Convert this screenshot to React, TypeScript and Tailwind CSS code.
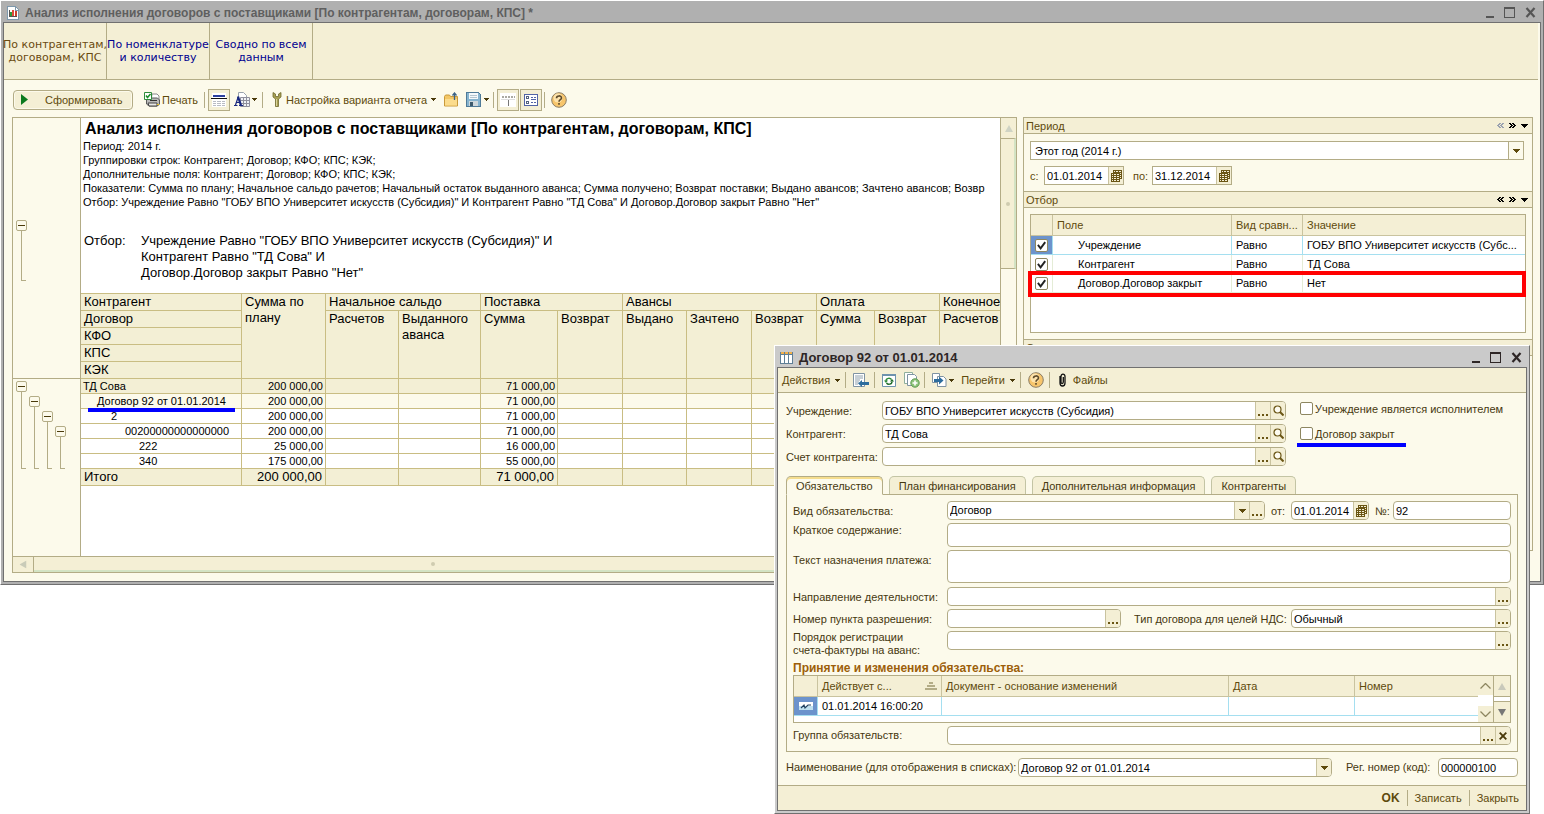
import type { ReactNode } from "react";

const reportTabs = [
  { lines: ["По контрагентам,", "договорам, КПС"], active: true },
  { lines: ["По номенклатуре", "и количеству"], active: false },
  { lines: ["Сводно по всем", "данным"], active: false },
];

const reportInfo = [
  "Период: 2014 г.",
  "Группировки строк: Контрагент; Договор; КФО; КПС; КЭК;",
  "Дополнительные поля: Контрагент; Договор; КФО; КПС; КЭК;",
  "Показатели: Сумма по плану; Начальное сальдо рачетов; Начальный остаток выданного аванса; Сумма получено; Возврат поставки; Выдано авансов; Зачтено авансов; Возвр",
  'Отбор: Учреждение Равно "ГОБУ ВПО Университет искусств (Субсидия)" И Контрагент Равно "ТД Сова" И Договор.Договор закрыт Равно "Нет"',
];

const reportRows = [
  { name: "ТД Сова", plan: "200 000,00", supply: "71 000,00", pad: "pl-[2px]", bg: "bg-[#f3efd5]" },
  { name: "Договор 92 от 01.01.2014", plan: "200 000,00", supply: "71 000,00", pad: "pl-4", bg: "bg-[#fcfaeb]", mark: true },
  { name: "2", plan: "200 000,00", supply: "71 000,00", pad: "pl-[30px]", bg: "bg-white" },
  { name: "00200000000000000", plan: "200 000,00", supply: "71 000,00", pad: "pl-11", bg: "bg-white" },
  { name: "222", plan: "25 000,00", supply: "16 000,00", pad: "pl-[58px]", bg: "bg-white" },
  { name: "340", plan: "175 000,00", supply: "55 000,00", pad: "pl-[58px]", bg: "bg-white" },
];

const filters = [
  { field: "Учреждение", kind: "Равно", value: "ГОБУ ВПО Университет искусств (Субс..." },
  { field: "Контрагент", kind: "Равно", value: "ТД Сова" },
  { field: "Договор.Договор закрыт", kind: "Равно", value: "Нет" },
];

const treeLevels = ["pt-0", "pt-[15px]", "pt-[30px]", "pt-[45px]"];

/* ---------- icons ---------- */

function Arrow({ className = "" }: { className?: string }) {
  return (
    <svg className={className} width="7" height="4" viewBox="0 0 7 4" shapeRendering="crispEdges">
      <path d="M0 0h7v1H0zM1 1h5v1H1zM2 2h3v1H2zM3 3h1v1H3z" fill="currentColor" />
    </svg>
  );
}

function SmallArrow() {
  return (
    <svg width="5" height="3" viewBox="0 0 5 3" shapeRendering="crispEdges">
      <path d="M0 0h5v1H0zM1 1h3v1H1zM2 2h1v1H2z" fill="#4a3a0a" />
    </svg>
  );
}

function Chevrons({ right, muted }: { right?: boolean; muted?: boolean }) {
  return (
    <svg width="7" height="5" viewBox="0 0 7 5" shapeRendering="crispEdges" className={muted ? "text-gray-400" : "text-black"}>
      <path
        d={
          right
            ? "M0 0h2v1H0zM1 1h2v1H1zM2 2h2v1H2zM1 3h2v1H1zM0 4h2v1H0zM3 0h2v1H3zM4 1h2v1H4zM5 2h2v1H5zM4 3h2v1H4zM3 4h2v1H3z"
            : "M2 0h2v1H2zM1 1h2v1H1zM0 2h2v1H0zM1 3h2v1H1zM2 4h2v1H2zM5 0h2v1H5zM4 1h2v1H4zM3 2h2v1H3zM4 3h2v1H4zM5 4h2v1H5z"
        }
        fill="currentColor"
      />
    </svg>
  );
}

function ChartIcon() {
  return (
    <svg width="12" height="14" viewBox="0 0 12 14" shapeRendering="crispEdges">
      <path d="M.5.5h8l3 3v10H.5z" fill="#fff" stroke="#7d98ac" />
      <path d="M8 0v4h4" fill="none" stroke="#7d98ac" />
      <path d="M2 4h1v7H2z" fill="#555" />
      <path d="M2 10h8v1H2z" fill="#555" />
      <path d="M3 6h2v4H3z" fill="#2f9a3a" />
      <path d="M5 4h2v6H5z" fill="#e04b3c" />
      <path d="M8 5h2v5H8z" fill="#c8402f" />
    </svg>
  );
}

function PrintIcon() {
  return (
    <svg width="16" height="15" viewBox="0 0 16 15">
      <path d="M8 2h5l2 2v5H7z" fill="#fff" stroke="#8a8a8a" />
      <path d="M2.500 8l3-2h8l2 2v4l-2 2H5l-2.500-2z" fill="#b9b9b9" stroke="#5b5b5b" />
      <path d="M4 11h9v3H5z" fill="#e8e8e8" stroke="#444" />
      <path d="M6 8.500h7" stroke="#333" />
      <path d="M.5.5h7v7h-7z" fill="#fff" stroke="#2f8b3a" />
      <path d="M2 3.500l1.500 2L6.500 2" fill="none" stroke="#1b8f2a" strokeWidth="1.500" />
      <path d="M13 12.500h2" stroke="#e6c21a" />
    </svg>
  );
}

function RowsIcon() {
  return (
    <svg width="16" height="14" viewBox="0 0 16 14" shapeRendering="crispEdges">
      <path d="M1 0h14v14H1z" fill="#fff" />
      <path d="M2 2h12v2H2z" fill="#2b3f9e" />
      <path d="M0 5h16v1H0z" fill="#111" />
      <path d="M2 8h3v1H2zM6 8h4v1H6zM11 8h3v1h-3zM2 10h3v1H2zM6 10h4v1H6zM11 10h3v1h-3zM2 12h3v1H2zM6 12h4v1H6zM11 12h3v1h-3z" fill="#b9bcc4" />
    </svg>
  );
}

function FontTableIcon() {
  return (
    <svg width="16" height="15" viewBox="0 0 16 15">
      <path d="M4.500.5h5l3 3v4h-8z" fill="#fff" stroke="#9aa3ad" />
      <path d="M6.500 5.500h9v9h-9zM6.500 8.500h9M6.500 11.500h9M9.500 5.500v9M12.500 5.500v9" fill="#eef1f5" stroke="#8f8f9c" />
      <path d="M0 13.500h3.500M5 13.500h4" stroke="#17277f" />
      <path d="M1.500 13L4.200 5M2.500 10.500h4" fill="none" stroke="#17277f" strokeWidth="1.200" />
      <path d="M4 4.500L7 13.500" stroke="#17277f" strokeWidth="2.200" />
    </svg>
  );
}

function WrenchIcon() {
  return (
    <svg width="10" height="15" viewBox="0 0 10 15">
      <path d="M1 0.500v4.500l2.500 2v7.500h3V7L9 5V.5L6.500 2v2.500h-3V2z" fill="#a79f52" stroke="#6f6a2e" strokeWidth=".8" />
      <path d="M4.500 7v7" stroke="#d8d29a" />
    </svg>
  );
}

function FolderIcon() {
  return (
    <svg width="15" height="15" viewBox="0 0 15 15">
      <path d="M.5 4.500l1-1.500h4l1 1.500h7v9.500H.5z" fill="#f3c767" stroke="#c99a3a" />
      <path d="M1 7h12v6.500H1z" fill="#fbdc8c" />
      <path d="M10.500 8V2M8.500 3.500l2-2.500 2 2.500" fill="none" stroke="#3b6286" strokeWidth="1.300" />
    </svg>
  );
}

function FloppyIcon() {
  return (
    <svg width="15" height="15" viewBox="0 0 15 15" shapeRendering="crispEdges">
      <path d="M.5.5h12l2 2v12H.5z" fill="#86b4cf" stroke="#4f7a98" />
      <path d="M3 1h9v6H3z" fill="#f5f9fb" />
      <path d="M4 3h7v1H4zM4 5h7v1H4z" fill="#b5c6d0" />
      <path d="M3 9h9v5H3z" fill="#cfd8dc" />
      <path d="M4 10h3v4H4z" fill="#3d5a6c" />
    </svg>
  );
}

function HeaderIcon() {
  return (
    <svg width="16" height="14" viewBox="0 0 16 14" shapeRendering="crispEdges">
      <path d="M0 0h16v14H0z" fill="#fff" />
      <path d="M2 3h2v2H2zM5 3h2v2H5zM8 3h2v2H8zM11 3h2v2h-2zM14 3h1v2h-1z" fill="#aaa9a2" />
      <path d="M8 6h1v7H8z" fill="#777" />
      <path d="M1 6h14v1H1z" fill="#ddd" />
    </svg>
  );
}

function SettingsIcon() {
  return (
    <svg width="14" height="12" viewBox="0 0 14 12" shapeRendering="crispEdges">
      <path d="M.5.5h13v11H.5z" fill="#fff" stroke="#5264a6" />
      <path d="M2.500 2.500h2v2h-2zM2.500 7.500h2v2h-2z" fill="#fff" stroke="#53617f" />
      <path d="M7 3h2v1H7zM10 3h2v1h-2zM7 5h5v1H7zM7 8h2v1H7zM10 8h2v1h-2z" fill="#5264a6" />
    </svg>
  );
}

function HelpIcon() {
  return (
    <svg width="16" height="16" viewBox="0 0 16 16">
      <circle cx="8" cy="8" r="7.300" fill="#f7c56b" stroke="#8a7d66" />
      <circle cx="7" cy="6" r="4.500" fill="#fde3ac" />
      <path d="M5.500 6.200C5.500 3.200 10.500 3.200 10.500 6c0 1.700-2.500 1.700-2.500 3.700M8 11v1.700" fill="none" stroke="#5d4a2a" strokeWidth="1.600" />
    </svg>
  );
}

function CalendarIcon() {
  return (
    <svg width="11" height="12" viewBox="0 0 11 12" shapeRendering="crispEdges">
      <path d="M2 0h9v9H9v3H0V3h2z" fill="#6a5514" />
      <path
        d="M3 1h1v1H3zM5 1h2v1H5zM8 1h2v1H8zM9 3h1v1H9zM9 5h1v1H9zM9 7h1v1H9zM1 4h1v1H1zM3 4h2v1H3zM6 4h2v1H6zM1 6h1v1H1zM3 6h2v1H3zM6 6h2v1H6zM1 8h1v1H1zM3 8h2v1H3zM6 8h2v1H6zM1 10h1v1H1zM3 10h2v1H3zM6 10h2v1H6z"
        fill="#f4efd5"
      />
    </svg>
  );
}

function SearchIcon() {
  return (
    <svg width="11" height="11" viewBox="0 0 11 11">
      <circle cx="4.500" cy="4.500" r="3.500" fill="#fdfbf0" stroke="#6a5514" strokeWidth="1.200" />
      <path d="M7 7l3.500 3.500" stroke="#6a5514" strokeWidth="2" />
    </svg>
  );
}

function DotsIcon() {
  return (
    <svg width="10" height="10" viewBox="0 0 10 10" shapeRendering="crispEdges">
      <path d="M0 8h2v2H0zM4 8h2v2H4zM8 8h2v2H8z" fill="#6a5514" />
    </svg>
  );
}

function ClearIcon() {
  return (
    <svg width="8" height="8" viewBox="0 0 8 8">
      <path d="M.7.7l6.600 6.600M7.300.7L.7 7.300" stroke="#4a3a0a" strokeWidth="1.900" />
    </svg>
  );
}

function ColumnsIcon() {
  return (
    <svg width="13" height="12" viewBox="0 0 13 12" shapeRendering="crispEdges">
      <path d="M0 0h13v12H0z" fill="#5f7f96" />
      <path d="M1 3h3v8H1zM5 3h3v8H5zM9 3h3v8H9z" fill="#fff" />
      <path d="M1 0h3v2H1zM5 0h3v2H5zM9 0h3v2H9z" fill="#f2b04a" />
    </svg>
  );
}

function DocBackIcon() {
  return (
    <svg width="16" height="15" viewBox="0 0 16 15">
      <path d="M.5.5h11v13H.5z" fill="#fff" stroke="#7f93a3" />
      <path d="M2 3h8M2 5h8M2 7h5M2 9h4M2 11h3" stroke="#8fa0ad" />
      <path d="M5 10.500l4-3.500v2h7v3H9v2z" fill="#2d6d9e" />
    </svg>
  );
}

function RefreshIcon() {
  return (
    <svg width="14" height="13" viewBox="0 0 14 13">
      <path d="M.5.5h13v12H.5z" fill="#fff" stroke="#6f93ad" />
      <path d="M0 0h14v2H0z" fill="#6f93ad" />
      <path d="M4 7C4 4 8 3.500 9.500 5.500" fill="none" stroke="#2f8b3a" strokeWidth="1.400" />
      <path d="M2 6.500h4L4 9z" fill="#2f8b3a" />
      <path d="M10 7.500C10 10.500 6 11 4.500 9" fill="none" stroke="#1e6b28" strokeWidth="1.400" />
      <path d="M8 7.500h4L10 5z" fill="#1e6b28" />
    </svg>
  );
}

function CopyAddIcon() {
  return (
    <svg width="16" height="16" viewBox="0 0 16 16">
      <path d="M.5.5h8v11h-8z" fill="#fff" stroke="#8fae9c" />
      <path d="M3.500 2.500h7l2 2v9h-9z" fill="#fff" stroke="#7f93a3" />
      <circle cx="11" cy="11" r="4.200" fill="#8fc47c" stroke="#5c9a4f" />
      <path d="M11 8.500v5M8.500 11h5" stroke="#fff" strokeWidth="1.600" />
    </svg>
  );
}

function GoIcon() {
  return (
    <svg width="15" height="14" viewBox="0 0 15 14">
      <path d="M.5.5h7v9h-7z" fill="#fff" stroke="#7f93a3" />
      <path d="M5.500 3.500h6l2.500 2.500v7.500H5.500z" fill="#fff" stroke="#7f93a3" />
      <path d="M2 6h5V3.500L11.500 7.500 7 11.500V9H2z" fill="#2d6d9e" />
    </svg>
  );
}

function ClipIcon() {
  return (
    <svg width="7" height="14" viewBox="0 0 7 14">
      <path d="M1 3v7c0 4 5 4 5 0V3.500C6 .3 2 .3 2 3.500V9c0 2 2.300 2 2.300 0V4" fill="none" stroke="#111" strokeWidth="1.300" />
    </svg>
  );
}

function SortIcon() {
  return (
    <svg width="12" height="8" viewBox="0 0 12 8" shapeRendering="crispEdges">
      <path d="M4 0h4v2H4zM2 3h8v2H2zM0 6h12v2H0z" fill="#b3ac86" />
    </svg>
  );
}

function EntryIcon() {
  return (
    <svg width="14" height="8" viewBox="0 0 14 8">
      <path d="M0 0h14v8H0z" fill="#fff" />
      <path d="M0 4h14v4H0z" fill="#bfe0ee" />
      <path d="M2 6l3-3 1 3 3-3h3" fill="none" stroke="#23415e" strokeWidth="1.200" />
    </svg>
  );
}

function Triangle({ className = "" }: { className?: string }) {
  return (
    <svg className={className} width="8" height="7" viewBox="0 0 8 7">
      <path d="M4 0l4 7H0z" fill="currentColor" />
    </svg>
  );
}

/* ---------- shared parts ---------- */

function WindowButtons({ className }: { className: string }) {
  return (
    <div className={`flex items-center gap-2.5 ${className}`}>
      <button type="button" aria-label="Свернуть">
        <svg width="9" height="11" viewBox="0 0 9 11" shapeRendering="crispEdges">
          <path d="M1 9h8v2H1z" fill="currentColor" />
        </svg>
      </button>
      <button type="button" aria-label="Развернуть">
        <svg width="11" height="11" viewBox="0 0 11 11" shapeRendering="crispEdges">
          <path d="M0 0h11v11H0zM1 2v8h9V2z" fill="currentColor" fillRule="evenodd" />
        </svg>
      </button>
      <button type="button" aria-label="Закрыть окно">
        <svg width="11" height="11" viewBox="0 0 11 11">
          <path d="M1.500 1l8 9M9.500 1l-8 9" stroke="currentColor" strokeWidth="2.200" />
        </svg>
      </button>
    </div>
  );
}

function Separator() {
  return <span className="h-4 w-px bg-[#b3ac86]" />;
}

function FieldButton({ label, children }: { label: string; children: ReactNode }) {
  return (
    <button
      type="button"
      aria-label={label}
      className="flex h-full w-[15px] shrink-0 items-center justify-center border-l border-[#c9c39f] bg-[#f4efd5] text-[#5e4a0c]"
    >
      {children}
    </button>
  );
}

type FieldProps = {
  id: string;
  value?: string;
  className?: string;
  square?: boolean;
  children?: ReactNode;
};

function Field({ id, value = "", className = "", square, children }: FieldProps) {
  return (
    <div
      className={`flex h-[19px] overflow-hidden border border-[#b3ac86] bg-white ${square ? "" : "rounded-sm"} ${className}`}
    >
      <input id={id} defaultValue={value} className="h-full w-full min-w-0 flex-1 px-0.5 text-black outline-none" />
      {children}
    </div>
  );
}

function PanelHeader({ title, muted }: { title: string; muted?: boolean }) {
  return (
    <div className="flex h-4 items-center justify-between border-b border-[#b3ac86] bg-[#f4efd5] px-0.5">
      <span className="text-[#5e4a0c]">{title}</span>
      <span className="flex items-center gap-[5px] pr-0.5">
        <Chevrons muted={muted} />
        <Chevrons right />
        <Arrow className="text-black" />
      </span>
    </div>
  );
}

function TreeToggle() {
  return (
    <button
      type="button"
      aria-label="Свернуть группу"
      className="flex size-[11px] shrink-0 items-center justify-center rounded-xs border border-[#b3ac86] bg-[#fcfaeb]"
    >
      <span className="h-px w-[7px] bg-[#4a3a0a]" />
    </button>
  );
}

/* ---------- main window ---------- */

function ReportToolbar() {
  return (
    <div className="flex h-[37px] items-center pl-[9px] pt-0.5 text-[#5e4a0c]">
      <button
        type="button"
        className="flex h-5 w-[120px] items-center rounded-sm border border-[#b3ac86] bg-[#f4efd5] pl-[7px] shadow-[inset_0_0_0_1px_#fcfaeb]"
      >
        <svg width="7" height="11" viewBox="0 0 7 11">
          <path d="M0 0l7 5.500L0 11z" fill="#0b7a1e" />
        </svg>
        <span className="ml-[17px]">Сформировать</span>
      </button>
      <button type="button" className="ml-[11px] flex items-center gap-0.5">
        <PrintIcon />
        Печать
      </button>
      <span className="ml-1.5 mr-[3px] flex"><Separator /></span>
      <button type="button" aria-label="Шапка таблицы" className="flex size-[22px] items-center justify-center border border-[#b3ac86] bg-[#f4efd5]">
        <RowsIcon />
      </button>
      <button type="button" aria-label="Оформление" className="ml-1 flex items-center gap-0.5">
        <FontTableIcon />
        <SmallArrow />
      </button>
      <span className="ml-[5px] mr-[9px] flex"><Separator /></span>
      <button type="button" className="flex items-center gap-1">
        <WrenchIcon />
        Настройка варианта отчета
        <SmallArrow />
      </button>
      <button type="button" aria-label="Открыть" className="ml-2"><FolderIcon /></button>
      <button type="button" aria-label="Сохранить" className="ml-[7px] flex items-center gap-[3px]">
        <FloppyIcon />
        <SmallArrow />
      </button>
      <span className="ml-1 mr-[3px] flex"><Separator /></span>
      <button type="button" aria-label="Заголовок" className="mr-px flex size-[22px] items-center justify-center border border-[#b3ac86] bg-[#f4efd5]">
        <HeaderIcon />
      </button>
      <button type="button" aria-label="Панель настроек" className="flex size-[22px] items-center justify-center border border-[#b3ac86] bg-[#f4efd5]">
        <SettingsIcon />
      </button>
      <span className="ml-0.5 mr-1.5 flex"><Separator /></span>
      <button type="button" aria-label="Справка"><HelpIcon /></button>
    </div>
  );
}

const headCell = "border-b border-r border-[#c9bd83] bg-[#f3efd5] px-[3px] text-left align-top font-normal";

function ReportTable() {
  return (
    <table className="w-[929px] table-fixed border-separate border-spacing-0 border-t border-[#c9bd83] text-black">
      <colgroup>
        <col className="w-[161px]" />
        <col className="w-[84px]" />
        <col className="w-[73px]" />
        <col className="w-[82px]" />
        <col className="w-[77px]" />
        <col className="w-[65px]" />
        <col className="w-[64px]" />
        <col className="w-[65px]" />
        <col className="w-[65px]" />
        <col className="w-[58px]" />
        <col className="w-[65px]" />
        <col className="w-[70px]" />
      </colgroup>
      <thead className="text-[13px] leading-4">
        <tr className="h-[17px]">
          <th className={headCell}>Контрагент</th>
          <th className={headCell} rowSpan={5}>Сумма по плану</th>
          <th className={headCell} colSpan={2}>Начальное сальдо</th>
          <th className={headCell} colSpan={2}>Поставка</th>
          <th className={headCell} colSpan={3}>Авансы</th>
          <th className={headCell} colSpan={2}>Оплата</th>
          <th className={headCell}>Конечное</th>
        </tr>
        <tr className="h-[17px]">
          <th className={headCell}>Договор</th>
          <th className={headCell} rowSpan={4}>Расчетов</th>
          <th className={headCell} rowSpan={4}>Выданного аванса</th>
          <th className={headCell} rowSpan={4}>Сумма</th>
          <th className={headCell} rowSpan={4}>Возврат</th>
          <th className={headCell} rowSpan={4}>Выдано</th>
          <th className={headCell} rowSpan={4}>Зачтено</th>
          <th className={headCell} rowSpan={4}>Возврат</th>
          <th className={headCell} rowSpan={4}>Сумма</th>
          <th className={headCell} rowSpan={4}>Возврат</th>
          <th className={headCell} rowSpan={4}>Расчетов</th>
        </tr>
        <tr className="h-[17px]"><th className={headCell}>КФО</th></tr>
        <tr className="h-[17px]"><th className={headCell}>КПС</th></tr>
        <tr className="h-[17px]"><th className={headCell}>КЭК</th></tr>
      </thead>
      <tbody className="text-[11px] leading-[14px]">
        {reportRows.map((row) => (
          <tr key={row.name} className={`h-[15px] ${row.bg}`}>
            <td className={`relative border-b border-r border-[#c9bd83] ${row.pad}`}>
              {row.name}
              {row.mark && <span className="absolute left-[7px] top-[14px] z-10 h-1 w-[147px] bg-[#0000ff]" />}
            </td>
            <td className="border-b border-r border-[#c9bd83] pr-0.5 text-right">{row.plan}</td>
            <td className="border-b border-r border-[#c9bd83]" />
            <td className="border-b border-r border-[#c9bd83]" />
            <td className="border-b border-r border-[#c9bd83] pr-0.5 text-right">{row.supply}</td>
            {[1, 2, 3, 4, 5, 6, 7].map((n) => (
              <td key={n} className="border-b border-r border-[#c9bd83]" />
            ))}
          </tr>
        ))}
      </tbody>
      <tfoot className="text-[13px] leading-4">
        <tr className="h-[17px]">
          <td className={headCell}>Итого</td>
          <td className="border-b border-r border-[#c9bd83] bg-[#f3efd5] pr-[3px] text-right">200 000,00</td>
          <td className={headCell} />
          <td className={headCell} />
          <td className="border-b border-r border-[#c9bd83] bg-[#f3efd5] pr-[3px] text-right">71 000,00</td>
          {[1, 2, 3, 4, 5, 6, 7].map((n) => (
            <td key={n} className={headCell} />
          ))}
        </tr>
      </tfoot>
    </table>
  );
}

function ReportPane() {
  return (
    <div className="min-w-0 flex-1 border border-[#b3ac86]">
      <div className="flex">
        <div className="flex w-[68px] shrink-0 flex-col border-r border-[#b3ac86]">
          <div className="h-[261px] border-b border-[#b3ac86] pl-[3px] pt-[102px]">
            <TreeToggle />
            <div className="ml-[5px] h-[50px] w-[5px] border-b border-l border-[#b3ac86]" />
          </div>
          <div className="flex h-[90px] gap-0.5 pl-[3px] pt-0.5">
            {treeLevels.map((pad) => (
              <div key={pad} className={`flex flex-col ${pad}`}>
                <TreeToggle />
                <div className="ml-[5px] w-[5px] flex-1 border-b border-l border-[#b3ac86]" />
              </div>
            ))}
          </div>
        </div>
        <div className="min-w-0 flex-1 overflow-hidden bg-white pb-[70px] text-black">
          <h1 className="whitespace-nowrap pl-1 pt-px text-base font-bold leading-5">
            Анализ исполнения договоров с поставщиками [По контрагентам, договорам, КПС]
          </h1>
          <div className="whitespace-nowrap pl-0.5 text-[11px] leading-[14px]">
            {reportInfo.map((line) => (
              <p key={line}>{line}</p>
            ))}
          </div>
          <div className="mb-3 mt-6 flex pl-[3px] text-[13px] leading-4">
            <p className="w-[57px]">Отбор:</p>
            <div className="whitespace-nowrap">
              <p>Учреждение Равно "ГОБУ ВПО Университет искусств (Субсидия)" И</p>
              <p>Контрагент Равно "ТД Сова" И</p>
              <p>Договор.Договор закрыт Равно "Нет"</p>
            </div>
          </div>
          <ReportTable />
        </div>
        <div className="flex w-4 shrink-0 flex-col border-l border-[#b3ac86]">
          <div className="flex h-5 items-center justify-center bg-[#f4efd5]">
            <Triangle className="text-[#cfd3c4]" />
          </div>
          <div className="flex h-[131px] items-center justify-center border-y border-r-2 border-[#b3ac86] border-r-[#d3e3c4] bg-[#f4efd5]">
            <span className="size-1 rounded-full bg-[#cfccb0]" />
          </div>
        </div>
      </div>
      <div className="flex h-4 border-t border-[#b3ac86]">
        <div className="flex w-[21px] items-center justify-center border-r border-[#b3ac86] bg-[#f4efd5]">
          <Triangle className="-rotate-90 text-[#c9cbb8]" />
        </div>
        <div className="flex flex-1 items-center border-b-2 border-[#d3e3c4] bg-[#f4efd5] pl-[397px]">
          <span className="size-1 rounded-full bg-[#cfccb0]" />
        </div>
        <div className="w-4 border-l border-[#b3ac86] bg-[#f4efd5]" />
      </div>
    </div>
  );
}

function SettingsPanel() {
  return (
    <div className="mb-[22px] w-[510px] shrink-0 border border-[#b3ac86] text-[#5e4a0c]">
      <PanelHeader title="Период" muted />
      <div className="px-1.5 pb-1.5 pt-[7px]">
        <div className="relative w-[494px]">
          <select
            aria-label="Период"
            className="block h-[19px] w-full appearance-none border border-[#b3ac86] bg-white px-1 text-black outline-none"
          >
            <option>Этот год (2014 г.)</option>
          </select>
          <span className="pointer-events-none absolute inset-y-0 right-0 flex w-4 items-center justify-center border border-[#b3ac86] bg-[#fcfaeb]">
            <Arrow />
          </span>
        </div>
        <div className="mt-1.5 flex items-center">
          <label htmlFor="from" className="w-3.5">с:</label>
          <Field id="from" value="01.01.2014" square className="w-20">
            <FieldButton label="Выбрать дату"><CalendarIcon /></FieldButton>
          </Field>
          <label htmlFor="to" className="w-7 pl-[9px]">по:</label>
          <Field id="to" value="31.12.2014" square className="w-20">
            <FieldButton label="Выбрать дату"><CalendarIcon /></FieldButton>
          </Field>
        </div>
      </div>
      <div className="border-t border-[#b3ac86]">
        <PanelHeader title="Отбор" />
      </div>
      <div className="relative mx-1.5 my-1.5 h-[119px] border border-[#b3ac86] bg-white">
        <table className="w-full table-fixed border-separate border-spacing-0 text-left">
          <colgroup>
            <col className="w-[22px]" />
            <col className="w-[179px]" />
            <col className="w-[71px]" />
            <col />
          </colgroup>
          <thead>
            <tr className="h-[21px] bg-[#f4efd5]">
              <th className="border-b border-r border-[#c9c39f]" />
              <th className="border-b border-r border-[#c9c39f] pl-1 font-normal">Поле</th>
              <th className="border-b border-r border-[#c9c39f] pl-1 font-normal">Вид сравн...</th>
              <th className="border-b border-[#c9c39f] pl-1 font-normal">Значение</th>
            </tr>
          </thead>
          <tbody className="text-black">
            {filters.map((f, i) => {
              const line = i === 0 ? "border-[#a5dff0]" : "border-[#e4ecd6]";
              return (
                <tr key={f.field} className="h-[19px]">
                  <td className={`border-b border-r ${line} ${i === 0 ? "bg-[#6c93cc]" : ""}`}>
                    <span className="relative mx-auto block size-[13px]">
                      <input
                        type="checkbox"
                        defaultChecked
                        aria-label={f.field}
                        className="block size-[13px] appearance-none rounded-xs border border-[#8d8660] bg-white"
                      />
                      <svg className="pointer-events-none absolute left-0.5 top-0.5" width="9" height="9" viewBox="0 0 8 8">
                        <path d="M.8 3.500l2.400 3L7.300 1" fill="none" stroke="#222" strokeWidth="1.700" />
                      </svg>
                    </span>
                  </td>
                  <td className={`border-b border-r pl-[25px] ${line}`}>{f.field}</td>
                  <td className={`border-b border-r pl-1 ${line}`}>{f.kind}</td>
                  <td className={`whitespace-nowrap border-b pl-1 ${line}`}>{f.value}</td>
                </tr>
              );
            })}
          </tbody>
        </table>
        <div className="pointer-events-none absolute -left-[3px] -right-px top-14 h-[26px] border-4 border-[#ff0000]" />
      </div>
      <div className="border-t border-[#b3ac86]">
        <PanelHeader title="Сортировка" />
      </div>
    </div>
  );
}

function MainWindow() {
  return (
    <div className="border-b border-l border-r border-t border-b-[#707070] border-l-white border-r-[#707070] border-t-white bg-[#b0b0b0] px-0.5 pb-0.5 leading-[14px]">
      <div className="flex h-[21px] items-center justify-between pl-1 pr-[5px] pt-0.5">
        <div className="flex items-center gap-1.5">
          <ChartIcon />
          <span className="text-[12px] font-bold text-[#5f5f5f]">
            Анализ исполнения договоров с поставщиками [По контрагентам, договорам, КПС] *
          </span>
        </div>
        <WindowButtons className="text-[#555]" />
      </div>
      <div className="border border-[#707070] bg-[#fcfaeb]">
        <nav className="mr-0.5 flex h-[57px] border-b border-[#b3ac86] bg-[#f4efd5] font-['DejaVu_Sans',Verdana,sans-serif] text-[11px] leading-[13px]">
          {reportTabs.map((tab) => (
            <button
              key={tab.lines[0]}
              type="button"
              className={`flex w-[103px] flex-col items-center justify-center whitespace-nowrap border-r border-[#b3ac86] ${
                tab.active ? "text-[#6a4a10]" : "text-[#000090]"
              }`}
            >
              <span>{tab.lines[0]}</span>
              <span>{tab.lines[1]}</span>
            </button>
          ))}
        </nav>
        <ReportToolbar />
        <div className="flex gap-1.5 pb-2 pl-2 pr-[7px]">
          <ReportPane />
          <SettingsPanel />
        </div>
      </div>
    </div>
  );
}

/* ---------- contract window ---------- */

function ContractToolbar() {
  return (
    <div className="flex h-[25px] items-center border-b border-[#b3ac86] bg-[#f4efd5] pl-1 text-[#5e4a0c]">
      <button type="button" className="flex items-center gap-[5px]">
        Действия
        <SmallArrow />
      </button>
      <span className="ml-[5px] mr-[7px] flex"><Separator /></span>
      <button type="button" aria-label="Записать в список"><DocBackIcon /></button>
      <span className="ml-[5px] mr-[7px] flex"><Separator /></span>
      <button type="button" aria-label="Перечитать"><RefreshIcon /></button>
      <button type="button" aria-label="Скопировать" className="ml-2"><CopyAddIcon /></button>
      <span className="ml-1 mr-[7px] flex"><Separator /></span>
      <button type="button" aria-label="Ввести на основании" className="flex items-center gap-0.5">
        <GoIcon />
        <SmallArrow />
      </button>
      <button type="button" className="ml-[7px] flex items-center gap-[5px]">
        Перейти
        <SmallArrow />
      </button>
      <span className="ml-[5px] mr-[7px] flex"><Separator /></span>
      <button type="button" aria-label="Справка"><HelpIcon /></button>
      <span className="ml-[5px] mr-[9px] flex"><Separator /></span>
      <button type="button" className="flex items-center gap-[7px]">
        <ClipIcon />
        Файлы
      </button>
    </div>
  );
}

function Dots() {
  return <FieldButton label="Выбрать"><DotsIcon /></FieldButton>;
}

function LookupField({ id, label, value }: { id: string; label: string; value?: string }) {
  return (
    <div className="flex items-center">
      <label htmlFor={id} className="w-24 whitespace-nowrap pt-0.5">{label}</label>
      <Field id={id} value={value} className="flex-1">
        <Dots />
        <FieldButton label="Открыть"><SearchIcon /></FieldButton>
      </Field>
    </div>
  );
}

function Tab({ children, active }: { children: ReactNode; active?: boolean }) {
  return (
    <button
      type="button"
      className={`rounded-t-[5px] border px-[9px] pt-px ${
        active
          ? "-mb-px h-[19px] border-[#b3ac86] border-b-[#fcfaeb] bg-[#fcfaeb] shadow-[inset_0_2px_0_#f5dd8e]"
          : "h-[18px] border-[#c3c4a4] border-b-0 bg-[#f4efd5]"
      }`}
    >
      {children}
    </button>
  );
}

function ChangesTable() {
  return (
    <div className="flex h-12 border border-[#b3ac86] bg-white">
      <table className="w-full flex-1 table-fixed border-separate border-spacing-0 self-start text-left">
        <colgroup>
          <col className="w-6" />
          <col className="w-[124px]" />
          <col />
          <col className="w-[126px]" />
          <col className="w-[123px]" />
        </colgroup>
        <thead>
          <tr className="h-[21px] bg-[#f4efd5] text-[#5e4a0c]">
            <th className="border-b border-r border-[#c9c39f]" />
            <th className="border-b border-r border-[#c9c39f] px-1 font-normal">
              <span className="flex items-center justify-between">
                Действует с... <SortIcon />
              </span>
            </th>
            <th className="border-b border-r border-[#c9c39f] pl-1 font-normal">Документ - основание изменений</th>
            <th className="border-b border-r border-[#c9c39f] pl-1 font-normal">Дата</th>
            <th className="border-b border-[#c9c39f] pl-1 font-normal">Номер</th>
          </tr>
        </thead>
        <tbody className="text-black">
          <tr className="h-[19px]">
            <td className="border-b border-r border-[#a5dff0] bg-[#6c93cc]">
              <span className="flex justify-center"><EntryIcon /></span>
            </td>
            <td className="whitespace-nowrap border-b border-r border-[#a5dff0] pl-1">01.01.2014 16:00:20</td>
            <td className="border-b border-r border-[#a5dff0]" />
            <td className="border-b border-r border-[#a5dff0]" />
            <td className="border-b border-[#a5dff0]" />
          </tr>
        </tbody>
      </table>
      <div className="flex w-[15px] flex-col justify-between text-[#8d8660]">
        <button type="button" aria-label="Вверх" className="flex h-[19px] items-center justify-center bg-[#f4efd5]">
          <svg width="11" height="6" viewBox="0 0 11 6">
            <path d="M.5 5.500l5-5 5 5" fill="none" stroke="currentColor" strokeWidth="1.300" />
          </svg>
        </button>
        <button type="button" aria-label="Вниз" className="flex h-4 items-center justify-center bg-[#f4efd5]">
          <svg width="11" height="6" viewBox="0 0 11 6">
            <path d="M.5.5l5 5 5-5" fill="none" stroke="currentColor" strokeWidth="1.300" />
          </svg>
        </button>
      </div>
      <div className="flex w-[17px] flex-col justify-between border-l border-[#b3ac86]">
        <div className="flex h-[21px] items-center justify-center border-b border-[#b3ac86] bg-[#f4efd5]">
          <Triangle className="text-[#c9c9bb]" />
        </div>
        <div className="flex h-[21px] items-center justify-center border-t border-[#b3ac86] bg-[#f4efd5]">
          <Triangle className="rotate-180 text-[#777]" />
        </div>
      </div>
    </div>
  );
}

const formRow = "grid grid-cols-[154px_1fr] items-center";

function ContractWindow() {
  return (
    <div className="absolute right-[14px] top-[345px] w-[756px] border border-b-[#707070] border-l-white border-r-[#707070] border-t-white bg-[#cacaca] px-0.5 pb-0.5 leading-[13px]">
      <div className="flex h-[21px] items-center justify-between pl-[3px] pr-[5px] pt-0.5">
        <div className="flex items-center gap-1.5">
          <ColumnsIcon />
          <span className="text-[13px] font-bold text-[#2e2626]">Договор 92 от 01.01.2014</span>
        </div>
        <WindowButtons className="text-[#2e2626]" />
      </div>
      <div className="border border-[#707070] bg-[#fcfaeb] text-[#46380f]">
        <ContractToolbar />
        <div className="px-2 pt-2">
          <div className="flex">
            <div className="flex w-[500px] flex-col gap-1">
              <LookupField id="org" label="Учреждение:" value="ГОБУ ВПО Университет искусств (Субсидия)" />
              <LookupField id="partner" label="Контрагент:" value="ТД Сова" />
              <LookupField id="account" label="Счет контрагента:" />
            </div>
            <div className="flex flex-col items-start gap-2.5 pl-3.5">
              <label className="flex items-center gap-0.5">
                <input type="checkbox" className="size-[13px] appearance-none rounded-xs border border-[#8d8660] bg-white" />
                <span className="pt-0.5">Учреждение является исполнителем</span>
              </label>
              <label className="relative flex items-center gap-0.5">
                <input type="checkbox" className="size-[13px] appearance-none rounded-xs border border-[#8d8660] bg-white" />
                <span className="pt-0.5">Договор закрыт</span>
                <span className="absolute -left-[3px] top-[17px] h-1 w-[109px] bg-[#0000ff]" />
              </label>
            </div>
          </div>

          <div className="mt-2.5 flex items-end gap-1.5">
            <Tab active>Обязательство</Tab>
            <Tab>План финансирования</Tab>
            <Tab>Дополнительная информация</Tab>
            <Tab>Контрагенты</Tab>
          </div>
          <div className="flex flex-col gap-[3px] border border-[#b3ac86] px-1.5 py-1.5">
            <div className={formRow}>
              <label htmlFor="kind" className="pt-0.5">Вид обязательства:</label>
              <div className="flex items-center">
                <div className="flex h-[19px] w-[318px] overflow-hidden rounded-sm border border-[#b3ac86] bg-white">
                  <select id="kind" className="h-full min-w-0 flex-1 appearance-none px-0.5 text-black outline-none">
                    <option>Договор</option>
                  </select>
                  <FieldButton label="Список"><Arrow /></FieldButton>
                  <Dots />
                </div>
                <label htmlFor="date" className="w-[26px] pl-1.5 pt-0.5">от:</label>
                <Field id="date" value="01.01.2014" className="w-[78px]">
                  <FieldButton label="Выбрать дату"><CalendarIcon /></FieldButton>
                </Field>
                <label htmlFor="num" className="w-6 pl-1.5 pt-0.5">№:</label>
                <Field id="num" value="92" className="flex-1" />
              </div>
            </div>
            <div className="grid grid-cols-[154px_1fr]">
              <label htmlFor="summary" className="pt-px">Краткое содержание:</label>
              <textarea id="summary" className="block h-6 w-full resize-none rounded-sm border border-[#b3ac86] bg-white px-0.5 outline-none" />
            </div>
            <div className="grid grid-cols-[154px_1fr]">
              <label htmlFor="purpose" className="pt-1">Текст назначения платежа:</label>
              <textarea id="purpose" className="block h-[33px] w-full resize-none rounded-sm border border-[#b3ac86] bg-white px-0.5 outline-none" />
            </div>
            <div className={`${formRow} pt-px`}>
              <label htmlFor="direction" className="pt-0.5">Направление деятельности:</label>
              <Field id="direction"><Dots /></Field>
            </div>
            <div className={formRow}>
              <label htmlFor="permit" className="pt-0.5">Номер пункта разрешения:</label>
              <div className="flex items-center">
                <Field id="permit" className="w-[174px]"><Dots /></Field>
                <label htmlFor="vat" className="w-[170px] whitespace-nowrap pl-[13px] pt-0.5">Тип договора для целей НДС:</label>
                <Field id="vat" value="Обычный" className="flex-1"><Dots /></Field>
              </div>
            </div>
            <div className="grid grid-cols-[154px_1fr]">
              <label htmlFor="invoice">
                Порядок регистрации
                <br />
                счета-фактуры на аванс:
              </label>
              <Field id="invoice"><Dots /></Field>
            </div>
            <div>
              <h2 className="pt-0.5 text-[12px] font-bold leading-[13px] text-[#9c5f0a]">Принятие и изменения обязательства:</h2>
              <ChangesTable />
            </div>
            <div className={formRow}>
              <label htmlFor="group">Группа обязательств:</label>
              <Field id="group">
                <Dots />
                <FieldButton label="Очистить"><ClearIcon /></FieldButton>
              </Field>
            </div>
          </div>

          <div className="flex items-center py-1.5">
            <label htmlFor="title" className="w-[232px] whitespace-nowrap">Наименование (для отображения в списках):</label>
            <Field id="title" value="Договор 92 от 01.01.2014" className="w-[314px]">
              <FieldButton label="Список"><Arrow /></FieldButton>
            </Field>
            <label htmlFor="code" className="w-[106px] whitespace-nowrap pl-3.5">Рег. номер (код):</label>
            <Field id="code" value="000000100" className="flex-1" />
          </div>
        </div>
        <div className="mt-0.5 flex h-[25px] items-center justify-end gap-[7px] border-t border-[#b3ac86] bg-[#f4efd5] pr-[7px] text-[#5e4a0c]">
          <button type="button" className="text-[12px] font-bold">OK</button>
          <Separator />
          <button type="button">Записать</button>
          <Separator />
          <button type="button">Закрыть</button>
        </div>
      </div>
    </div>
  );
}

export default function App() {
  return (
    <div className="relative min-h-screen overflow-hidden bg-white font-['Liberation_Sans',Arial,sans-serif] text-[11px]">
      <MainWindow />
      <ContractWindow />
    </div>
  );
}
